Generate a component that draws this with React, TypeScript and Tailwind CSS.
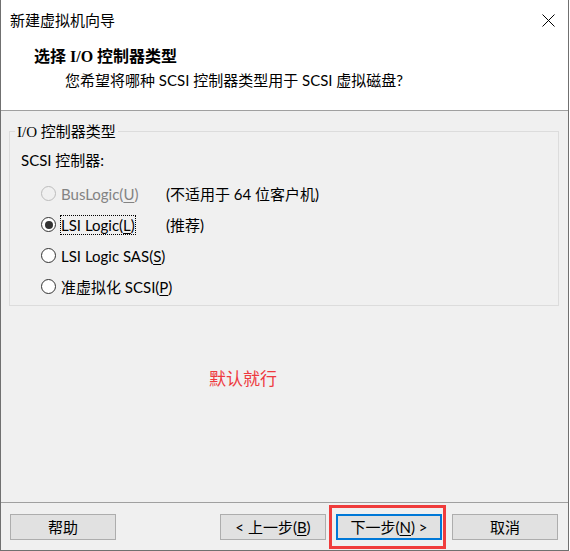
import React from 'react';

const UI = "font-['Lato','Noto_Sans_CJK_SC',sans-serif]";

function Radio({ checked, disabled }: { checked?: boolean; disabled?: boolean }) {
  return (
    <span
      className={`w-[15px] h-[15px] rounded-full border flex items-center justify-center shrink-0 ${
        disabled ? 'border-[#bcbcbc] bg-[#f0f0f0]' : 'border-[#333333] bg-white'
      }`}
    >
      {checked && <span className="w-[8px] h-[8px] rounded-full bg-[#333333]" />}
    </span>
  );
}

function Mn({ c }: { c: string }) {
  return <span className="underline underline-offset-[2px]">{c}</span>;
}

const options = [
  { pre: 'BusLogic(', key: 'U', note: '(不适用于 64 位客户机)', disabled: true },
  { pre: 'LSI Logic(', key: 'L', note: '(推荐)', checked: true, focus: true },
  { pre: 'LSI Logic SAS(', key: 'S' },
  { pre: '准虚拟化 SCSI(', key: 'P' },
];

export default function App() {
  return (
    <div className={`w-[570px] h-[551px] bg-white text-black text-[15px] leading-[20px] ${UI}`}>
      <div className="w-[569px] h-[551px] flex flex-col border-l border-r border-b border-[#707070] bg-[#f0f0f0]">
        {/* Header */}
        <div className="h-[110px] bg-white">
          <div className="h-[40px] flex items-center justify-between pl-[9px] pr-[13px]">
            <span>新建虚拟机向导</span>
            <svg width="13" height="13" viewBox="0 0 13 13">
              <path d="M0.5 0.5 L12.5 12.5 M12.5 0.5 L0.5 12.5" stroke="#000" strokeWidth="1" />
            </svg>
          </div>
          <div className="mt-[7px] pl-[33px] text-[16px] font-bold font-['Liberation_Serif','Noto_Sans_CJK_SC',serif]">
            选择 I/O 控制器类型
          </div>
          <div className="mt-[3px] pl-[64px]">您希望将哪种 SCSI 控制器类型用于 SCSI 虚拟磁盘?</div>
        </div>
        <div className="h-px bg-[#a0a0a0]" />

        {/* Body */}
        <div className="flex-1 pt-[10px]">
          <fieldset className="ml-[8px] w-[550px] border border-[#dcdcdc] px-0 pb-[3px]">
            <legend className="ml-[5px] px-[2px]">
              <span className="font-['Liberation_Serif','Noto_Sans_CJK_SC',serif]">I/O</span> 控制器类型
            </legend>
            <div className="mt-[8px] pl-[11px]">SCSI 控制器:</div>
            <div className="mt-[8px] flex flex-col">
              {options.map((o, i) => (
                <div key={i} className="h-[31px] flex items-center pl-[31px] whitespace-nowrap">
                  <Radio checked={o.checked} disabled={o.disabled} />
                  <div className="ml-[4px] min-w-[106px] shrink-0">
                    <span
                      className={`inline-block border px-0 leading-[18px] ${
                        o.focus ? 'border-dotted border-black' : 'border-transparent'
                      } ${o.disabled ? 'text-[#838383]' : ''}`}
                    >
                      {o.pre}
                      <Mn c={o.key} />)
                    </span>
                  </div>
                  {o.note && <span>{o.note}</span>}
                </div>
              ))}
            </div>
          </fieldset>
          <div className="mt-[61px] pl-[208px] text-[17px] leading-[24px] text-[#ee3a3f]">默认就行</div>
        </div>

        {/* Footer */}
        <div className="h-px bg-[#a0a0a0]" />
        <div className="h-[47px] pt-[11px] pl-[9px] flex items-start">
          <button className="w-[106px] h-[26px] bg-[#e1e1e1] border border-[#adadad] leading-[20px]">帮助</button>
          <button className="ml-[104px] w-[106px] h-[26px] bg-[#e1e1e1] border border-[#adadad] leading-[20px]">
            &lt; 上一步(<Mn c="B" />)
          </button>
          <div className="relative ml-[10px]">
            <button className="w-[106px] h-[26px] bg-[#e1e1e1] border-2 border-[#0078d7] leading-[20px]">
              下一步(<Mn c="N" />) &gt;
            </button>
            <div className="absolute left-[-7px] right-[-4px] top-[-9px] bottom-[-9px] border-[3px] border-[#f03c3c]" />
          </div>
          <button className="ml-[10px] w-[106px] h-[26px] bg-[#e1e1e1] border border-[#adadad] leading-[20px]">取消</button>
        </div>
      </div>
    </div>
  );
}
